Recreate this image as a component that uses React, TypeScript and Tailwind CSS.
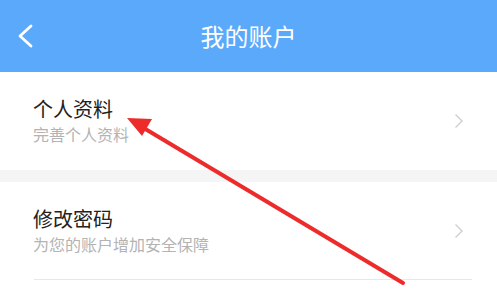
import React from "react";

const Chevron = () => (
  <svg width="10" height="16" viewBox="0 0 10 16" className="shrink-0">
    <path d="M1.5 1.5 L8 8 L1.5 14.5" fill="none" stroke="#cfcfcf" strokeWidth="1.4" />
  </svg>
);

export default function App() {
  return (
    <div
      className="relative w-[497px] h-[299px] overflow-hidden bg-white"
      style={{ fontFamily: '"Noto Sans CJK SC", "Noto Sans", sans-serif' }}
    >
      <div className="h-[72px] bg-[#5ba9fa] flex items-center">
        <div className="w-[60px] pl-[17px] flex items-center">
          <svg width="18" height="24" viewBox="0 0 18 24">
            <path d="M14 2 L3 12 L14 22" fill="none" stroke="white" strokeWidth="2.8" strokeLinecap="round" strokeLinejoin="round" />
          </svg>
        </div>
        <div className="flex-1 text-center text-white text-[24px] leading-[30px] mt-[-1px]">我的账户</div>
        <div className="w-[60px]" />
      </div>

      <div className="h-[98px] flex items-center pl-[33px] pr-[33px]">
        <div className="flex-1 self-start pt-[25px]">
          <div className="text-[20px] leading-[24px] text-[#222]">个人资料</div>
          <div className="mt-[3px] text-[16px] leading-[20px] text-[#b3b3b3]">完善个人资料</div>
        </div>
        <Chevron />
      </div>

      <div className="h-[12px] bg-[#f5f5f5]" />

      <div className="h-[97px] flex items-center pl-[33px] pr-[33px]">
        <div className="flex-1 self-start pt-[25px]">
          <div className="text-[20px] leading-[24px] text-[#222]">修改密码</div>
          <div className="mt-[3px] text-[16px] leading-[20px] text-[#b3b3b3]">为您的账户增加安全保障</div>
        </div>
        <Chevron />
      </div>
      <div className="ml-[34px] mr-[25px] h-px bg-[#e8e8e8]" />

      <svg className="absolute left-0 top-0" width="497" height="299" viewBox="0 0 497 299">
        <line x1="403" y1="283" x2="142" y2="127" stroke="#ee2b2b" strokeWidth="4" strokeLinecap="round" />
        <polygon points="127,118 152,119 142,136" fill="#ee2b2b" />
      </svg>
    </div>
  );
}
